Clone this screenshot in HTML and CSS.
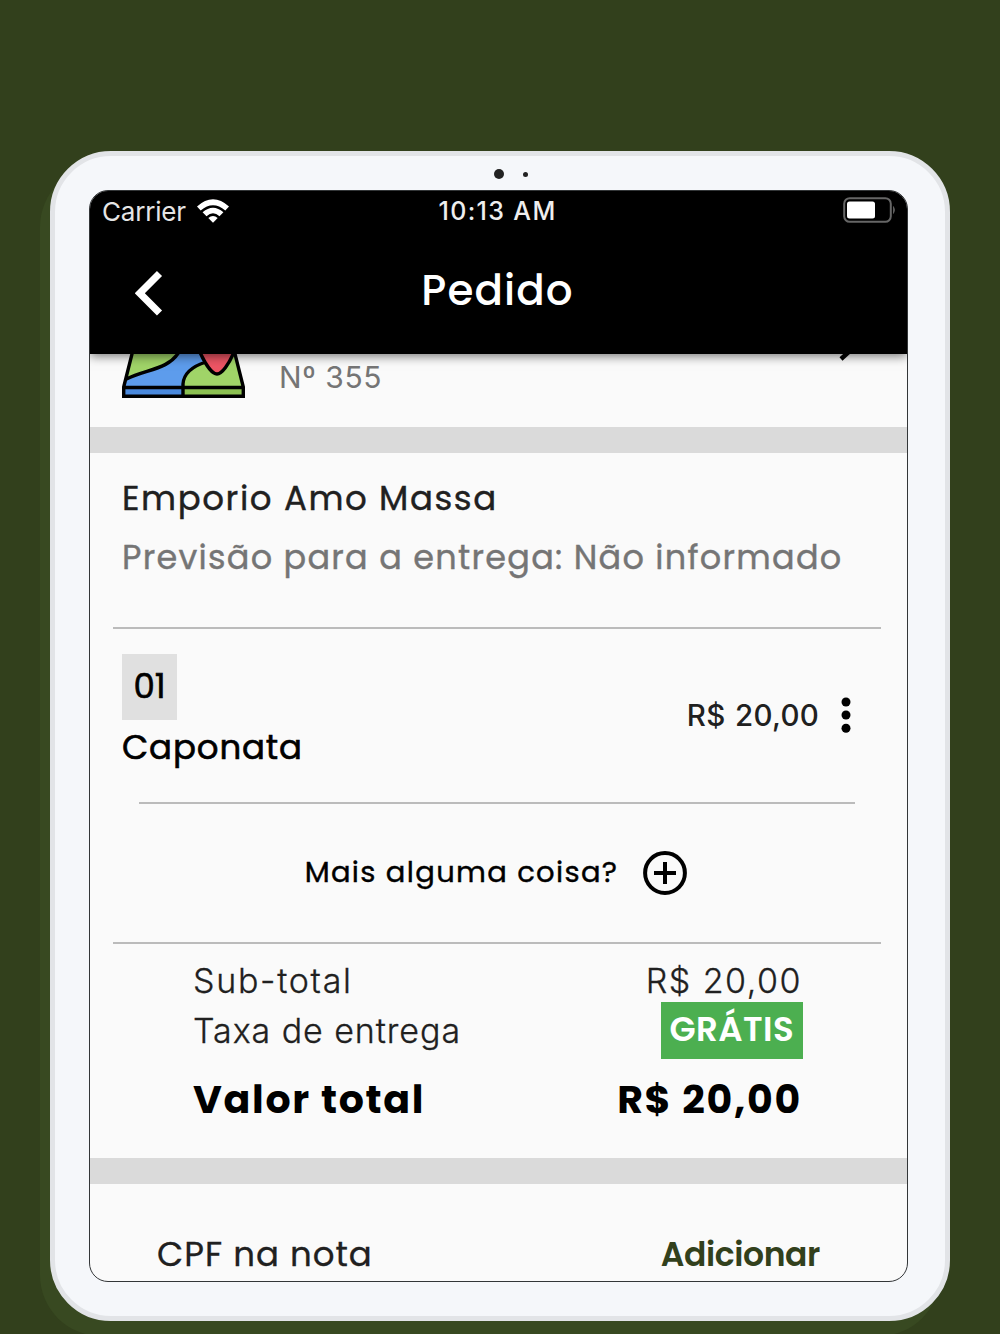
FILE: index.html
```html
<!DOCTYPE html>
<html lang="pt-BR">
<head>
<meta charset="utf-8">
<title>Pedido</title>
<link rel="stylesheet" href="styles.css">
</head>
<body>
<main class="device">
  <div class="cameras"><span class="camera"></span><span class="sensor"></span></div>
  <div class="screen">
    <header class="header">
      <div class="status">
        <div class="network"><span class="carrier">Carrier</span>
          <svg class="wifi" viewBox="0 0 32 24"><path d="M0 7.5Q16-7 32 7.5L28.300 11.500Q16 1 3.700 11.500Z"/><path d="M5.6 13.3Q16 4 26.400 13.300L22.500 17.200Q16 11.500 9.500 17.200Z"/><path d="M11.300 19Q16 15 20.700 19L16 23.800Z"/></svg>
        </div>
        <span class="clock">10:13 AM</span>
        <svg class="battery" viewBox="0 0 53 26"><rect x="1.200" y="1.200" width="46.600" height="23.600" rx="5.500" fill="none" stroke="#666" stroke-width="2"/><rect x="4" y="4.500" width="28" height="17" rx="2.500" fill="#fff"/><path d="M50.500 9.500q2 3.500 0 7z" fill="#777" stroke="#777" stroke-width=".5"/></svg>
      </div>
      <div class="titlebar">
        <svg class="back" viewBox="0 0 28 46"><path d="M24.500 3.500L4.800 23.200L24.500 43" fill="none" stroke="#fff" stroke-width="7.200"/></svg>
        <h1 class="title">Pedido</h1>
      </div>
    </header>
    <section class="address">
      <svg class="map" viewBox="0 0 124 44">
        <path d="M12-4L2 34V42.500H61V-4Z" fill="#5d9cec"/><path d="M61 42.500V27Q64 14 85 7L105-4L112-4L122 34V42.500Z" fill="#a0d468"/><path d="M61 33V26Q65 13 86 7L78-4H55L30 20L4 26V33Z" fill="#5d9cec"/><path d="M12-4L5 25C20 14 45 16 58-4Z" fill="#a0d468"/><path d="M3 34H61V42H3Z" fill="#4a89dc"/><path d="M62 34H121V42H62Z" fill="#8cc152"/><path d="M77-4Q82 12 95 20Q107 12 112-4Z" fill="#ed5564"/>
        <g fill="none" stroke="#000" stroke-width="3.400"><path d="M11-4L1.700 33V42.300H121.300V33L112-4M2 33.500H121M4.500 25C24 15 46 16 57-2M61 42V30Q62 15 84 8M77-4C83 10 90 20 95 20C100 20 107 10 112-2"/></g>
      </svg>
      <span class="number">Nº 355</span>
      <svg class="chevron" viewBox="0 0 14 8"><path d="M14-5L3 5" stroke="#000" stroke-width="4.500"/></svg>
    </section>
    <div class="band"></div>
    <section class="store">
      <h2 class="store-name">Emporio Amo Massa</h2>
      <p class="forecast">Previsão para a entrega: Não informado</p>
    </section>
    <hr class="rule">
    <section class="item">
      <div class="product"><span class="quantity">01</span><span class="product-name">Caponata</span></div>
      <span class="price">R$ 20,00</span>
      <svg class="dots" viewBox="0 0 10 36"><circle cx="5" cy="5" r="4.500"/><circle cx="5" cy="18" r="4.500"/><circle cx="5" cy="31.200" r="4.500"/></svg>
    </section>
    <hr class="rule short">
    <section class="more">
      <span class="more-text">Mais alguma coisa?</span>
      <svg class="plus" viewBox="0 0 44 44"><path d="M22 11V33M11 22H33" stroke="#000" stroke-width="4"/><circle cx="22" cy="22" r="19.900" fill="none" stroke="#000" stroke-width="4"/></svg>
    </section>
    <hr class="rule">
    <section class="totals">
      <div class="line"><span class="sub">Sub-total</span><span class="amount">R$ 20,00</span></div>
      <div class="line"><span class="fee">Taxa de entrega</span><span class="free">GRÁTIS</span></div>
      <div class="line total"><span>Valor total</span><span class="total-amount">R$ 20,00</span></div>
    </section>
    <div class="band"></div>
    <section class="invoice"><span class="cpf">CPF na nota</span><span class="add">Adicionar</span></section>
  </div>
</main>
</body>
</html>
```
FILE: styles.css
```css
* { box-sizing: border-box; }
body { margin: 0; height: 1334px; overflow: hidden; padding: 151px 50px 0; background: #32401c; font-family: Poppins, Inter, "Noto Sans", sans-serif; color: #202020; }
h1, h2, p { margin: 0; font-weight: inherit; }
svg { display: block; flex: none; }
span { white-space: nowrap; }
.device { width: 900px; height: 1170px; padding: 0 34px; border: 5px solid #e2e4e7; border-radius: 61px; background: #f5f7fa; box-shadow: -10px 15px 0 #384921; }
.cameras { height: 34px; display: flex; align-items: center; padding: 2px 0 0 405px; gap: 19px; }
.camera { width: 10px; height: 10px; border-radius: 50%; background: #222; }
.sensor { width: 5px; height: 5px; border-radius: 50%; background: #222; }
.screen { width: 819px; height: 1092px; border: 1.500px solid #333638; border-radius: 19px; background: #fafafa; overflow: hidden; }
.header { position: relative; height: 163px; background: #000; color: #fff; box-shadow: 0 2px 10px rgba(0, 0, 0, .55); }
.status { height: 39px; display: grid; grid-template-columns: 1fr auto 1fr; align-items: center; padding: 0 12px; line-height: 39px; }
.network { display: flex; align-items: center; gap: 11px; }
.carrier, .clock, .number, .price, .sub, .fee, .amount { font-family: Inter, "Noto Sans", sans-serif; }
.carrier { font-size: 26px; letter-spacing: -.200px; color: #e5e5e5; }
.wifi { width: 32px; height: 24px; fill: #fff; }
.clock { font-size: 25px; font-weight: 500; letter-spacing: 1.350px; color: #eee; margin: 1px 2px 0 0; }
.battery { width: 53px; height: 26px; justify-self: end; margin: -2px -1px 0 0; }
.titlebar { display: grid; grid-template-columns: 60px 1fr 60px; align-items: center; height: 122px; padding: 0 47px 0 45px; }
.back { width: 28px; height: 46px; margin-top: 4px; }
.title { font-size: 42px; font-weight: 500; line-height: 120px; text-align: center; letter-spacing: 1.100px; }
.address { height: 73px; display: flex; align-items: flex-start; padding: 0 55px 0 32px; }
.map { width: 124px; height: 44px; }
.number { margin-left: 33px; font-size: 30px; line-height: 47px; letter-spacing: .600px; color: #757575; flex: 1; }
.chevron { width: 14px; height: 8px; }
.band { height: 26px; background: #dadada; }
.store { height: 174px; padding: 15px 32px; line-height: 60px; }
.store-name { font-size: 34px; letter-spacing: 1.600px; -webkit-text-stroke: .4px; }
.forecast { font-size: 33.500px; letter-spacing: 1.260px; color: #757575; white-space: nowrap; -webkit-text-stroke: .4px; }
.rule { border: 0; height: 2px; margin: 0 26px 0 23px; background: #bbb; }
.short { margin: 0 52px 0 49px; }
.item { height: 173px; display: flex; align-items: center; padding: 0 56px 2px 32px; }
.product { flex: 1; display: flex; flex-direction: column; align-items: flex-start; }
.quantity { width: 55px; height: 66px; background: #e0e0e0; color: #000; font-size: 34px; line-height: 64px; text-align: center; -webkit-text-stroke: .6px; }
.product-name { font-size: 34px; letter-spacing: .850px; color: #000; line-height: 54px; margin-bottom: 2px; -webkit-text-stroke: .6px; }
.price { font-size: 29.500px; font-weight: 450; letter-spacing: .250px; word-spacing: 1.500px; margin-right: 22px; }
.dots { width: 10px; height: 36px; }
.more { height: 138px; display: flex; align-items: center; justify-content: center; gap: 25px; padding-right: 5px; color: #000; font-size: 29px; letter-spacing: 1.320px; -webkit-text-stroke: .4px; }
.more-text { margin-bottom: 2px; }
.plus { width: 44px; height: 44px; }
.totals { height: 214px; padding: 12px 104px 0 103px; font-size: 34px; font-weight: 300; }
.line { display: flex; justify-content: space-between; line-height: 50px; }
.sub, .fee, .amount { -webkit-text-stroke: .3px; }
.sub { letter-spacing: 1.700px; }
.fee { letter-spacing: .920px; }
.amount { letter-spacing: 1.500px; padding-right: 1px; }
.free { height: 57px; padding: 0 9px; margin-top: -4px; line-height: 55px; letter-spacing: .400px; background: #4caf50; color: #fff; font-weight: 600; }
.total { font-size: 39.500px; font-weight: 700; color: #000; line-height: 82px; letter-spacing: 1.700px; }
.total-amount { padding-right: 1px; }
.invoice { height: 97px; display: flex; justify-content: space-between; padding: 22px 87px 0 67px; line-height: 97px; font-size: 34px; letter-spacing: 1px; -webkit-text-stroke: .3px; }
.add { color: #32401c; font-weight: 600; font-size: 33px; letter-spacing: -.400px; -webkit-text-stroke: 0; }
```
